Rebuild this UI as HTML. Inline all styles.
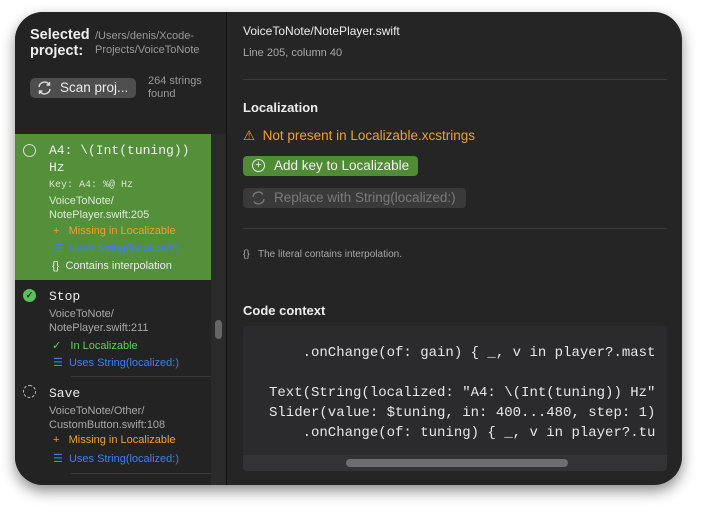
<!DOCTYPE html><html><head><style>
*{margin:0;padding:0;box-sizing:border-box}
body{width:711px;height:517px;background:#fff;position:relative;overflow:hidden;font-family:"Liberation Sans",sans-serif;}
.win{position:absolute;left:15px;top:12px;width:667px;height:473px;border-radius:28px;background:#252525;overflow:hidden;box-shadow:0 6px 14px rgba(0,0,0,.45)}
.a{position:absolute;white-space:nowrap}
.m{font-family:"Liberation Mono",monospace}
.g{color:#a8a8a8}
.sep{position:absolute;height:1px;background:#3a3a3a}
</style></head><body>
<div class="win">
<div class="a" style="left:0;top:0;width:211px;height:473px;background:#232323"></div>
<div class="a" style="left:196px;top:122px;width:15px;height:351px;background:#2a2a2a"></div>
<div class="a" style="left:211px;top:0;width:1px;height:473px;background:#111"></div>
<div class="a" style="left:200px;top:308px;width:7px;height:19px;border-radius:4px;background:#666"></div>
<div class="a" style="left:15px;top:15px;color:#eee;font-weight:bold;font-size:14.5px;line-height:16px">Selected<br>project:</div>
<div class="a g" style="left:80px;top:17px;font-size:11px;line-height:14px;color:#9a9a9a">/Users/denis/Xcode-<br>Projects/VoiceToNote</div>
<div class="a" style="left:15px;top:66px;width:106px;height:20px;border-radius:5px;background:#4e4e4e;color:#eee;font-size:13.5px;line-height:20px;padding-left:30px">Scan proj...</div>
<svg class="a" style="left:22px;top:69px" width="15" height="14" viewBox="0 0 15 14"><path d="M2 6a5.5 5.5 0 0 1 10-2.5M13 8a5.5 5.5 0 0 1-10 2.5" fill="none" stroke="#ddd" stroke-width="1.4"/><path d="M12.5 1v3h-3M2.5 13v-3h3" fill="none" stroke="#ddd" stroke-width="1.4"/></svg>
<div class="a" style="left:133px;top:63px;font-size:11px;line-height:13px;color:#9a9a9a">264 strings<br>found</div>
<div class="a" style="left:0;top:122px;width:196px;height:146px;background:#548f3a"></div>
<div class="a" style="left:8px;top:132px;width:13px;height:13px;border:1.3px solid #ddd;border-radius:50%"></div>
<div class="a m" style="left:34px;top:130px;font-size:13px;line-height:17px;color:#f2f2f2">A4: \(Int(tuning))<br>Hz</div>
<div class="a m" style="left:34px;top:168px;font-size:10px;color:#d8e6d0">Key: A4: %@ Hz</div>
<div class="a" style="left:34px;top:182px;font-size:11px;line-height:14px;color:#e0ecd8">VoiceToNote/<br>NotePlayer.swift:205</div>
<div class="a" style="left:38px;top:213px;font-size:11px;color:#f0a030">+&nbsp;&nbsp;&nbsp;Missing in Localizable</div>
<div class="a" style="left:38px;top:230px;font-size:11px;color:#3a82f0">☰&nbsp;&nbsp;Uses String(localized:)</div>
<div class="a" style="left:37px;top:248px;font-size:11px;color:#eee">{}&nbsp;&nbsp;Contains interpolation</div>
<div class="a" style="left:8px;top:277px;width:13px;height:13px;border-radius:50%;background:#5ac05a;color:#1a1a1a;font-size:9px;line-height:13px;text-align:center;font-weight:bold">✓</div>
<div class="a m" style="left:34px;top:277px;font-size:13px;color:#eee">Stop</div>
<div class="a" style="left:34px;top:295px;font-size:11px;line-height:14px;color:#a8a8a8">VoiceToNote/<br>NotePlayer.swift:211</div>
<div class="a" style="left:37px;top:327px;font-size:11px;color:#5ed05e">✓&nbsp;&nbsp;&nbsp;In Localizable</div>
<div class="a" style="left:38px;top:344px;font-size:11px;color:#3a82f0">☰&nbsp;&nbsp;Uses String(localized:)</div>
<div class="sep" style="left:56px;top:364px;width:140px"></div>
<div class="a" style="left:8px;top:373px;width:13px;height:13px;border:1.3px dashed #bbb;border-radius:50%"></div>
<div class="a m" style="left:34px;top:374px;font-size:13px;color:#eee">Save</div>
<div class="a" style="left:34px;top:392px;font-size:11px;line-height:14px;color:#a8a8a8">VoiceToNote/Other/<br>CustomButton.swift:108</div>
<div class="a" style="left:38px;top:422px;font-size:11px;color:#f0a030">+&nbsp;&nbsp;&nbsp;Missing in Localizable</div>
<div class="a" style="left:38px;top:440px;font-size:11px;color:#3a82f0">☰&nbsp;&nbsp;Uses String(localized:)</div>
<div class="sep" style="left:56px;top:461px;width:140px"></div>

<div class="a" style="left:228px;top:12px;font-size:12px;color:#eee">VoiceToNote/NotePlayer.swift</div>
<div class="a" style="left:228px;top:35px;font-size:11px;color:#a8a8a8">Line 205, column 40</div>
<div class="sep" style="left:228px;top:67px;width:424px"></div>
<div class="a" style="left:228px;top:88px;font-size:13px;font-weight:bold;color:#eee">Localization</div>
<div class="a" style="left:228px;top:116px;font-size:13.5px;color:#f0a030">⚠&nbsp;&nbsp;Not present in Localizable.xcstrings</div>
<div class="a" style="left:228px;top:144px;width:175px;height:20px;border-radius:4px;background:#4f8c35;color:#f2f2f2;font-size:13.5px;line-height:20px;padding-left:31px">Add key to Localizable</div>
<div class="a" style="left:237px;top:147px;width:13px;height:13px;border:1.2px solid #eee;border-radius:50%;color:#eee;font-size:11px;line-height:10px;text-align:center">+</div>
<div class="a" style="left:228px;top:176px;width:223px;height:20px;border-radius:4px;background:#3a3a3a;color:#7a7a7a;font-size:13.5px;line-height:20px;padding-left:31px">Replace with String(localized:)</div>
<svg class="a" style="left:236px;top:179px" width="15" height="14" viewBox="0 0 15 14"><path d="M2 6a5.5 5.5 0 0 1 10-2.5M13 8a5.5 5.5 0 0 1-10 2.5" fill="none" stroke="#777" stroke-width="1.4"/></svg>
<div class="sep" style="left:228px;top:216px;width:424px"></div>
<div class="a" style="left:228px;top:237px;font-size:10px;color:#a8a8a8">{}&nbsp;&nbsp;&nbsp;The literal contains interpolation.</div>
<div class="a" style="left:228px;top:291px;font-size:13px;font-weight:bold;color:#eee">Code context</div>
<div class="a" style="left:228px;top:314px;width:424px;height:145px;background:#2b2b2d;border-radius:4px;overflow:hidden">
<pre class="m" style="position:absolute;left:26px;top:17px;font-size:14px;line-height:20px;color:#e8e8e8">    .onChange(of: gain) { _, v in player?.mast

Text(String(localized: "A4: \(Int(tuning)) Hz"
Slider(value: $tuning, in: 400...480, step: 1)
    .onChange(of: tuning) { _, v in player?.tu</pre>
<div class="a" style="left:0;top:129px;width:424px;height:16px;background:#333336"></div>
<div class="a" style="left:103px;top:133px;width:222px;height:8px;border-radius:4px;background:#6e6e70"></div>
</div>
</div>
</body></html>
